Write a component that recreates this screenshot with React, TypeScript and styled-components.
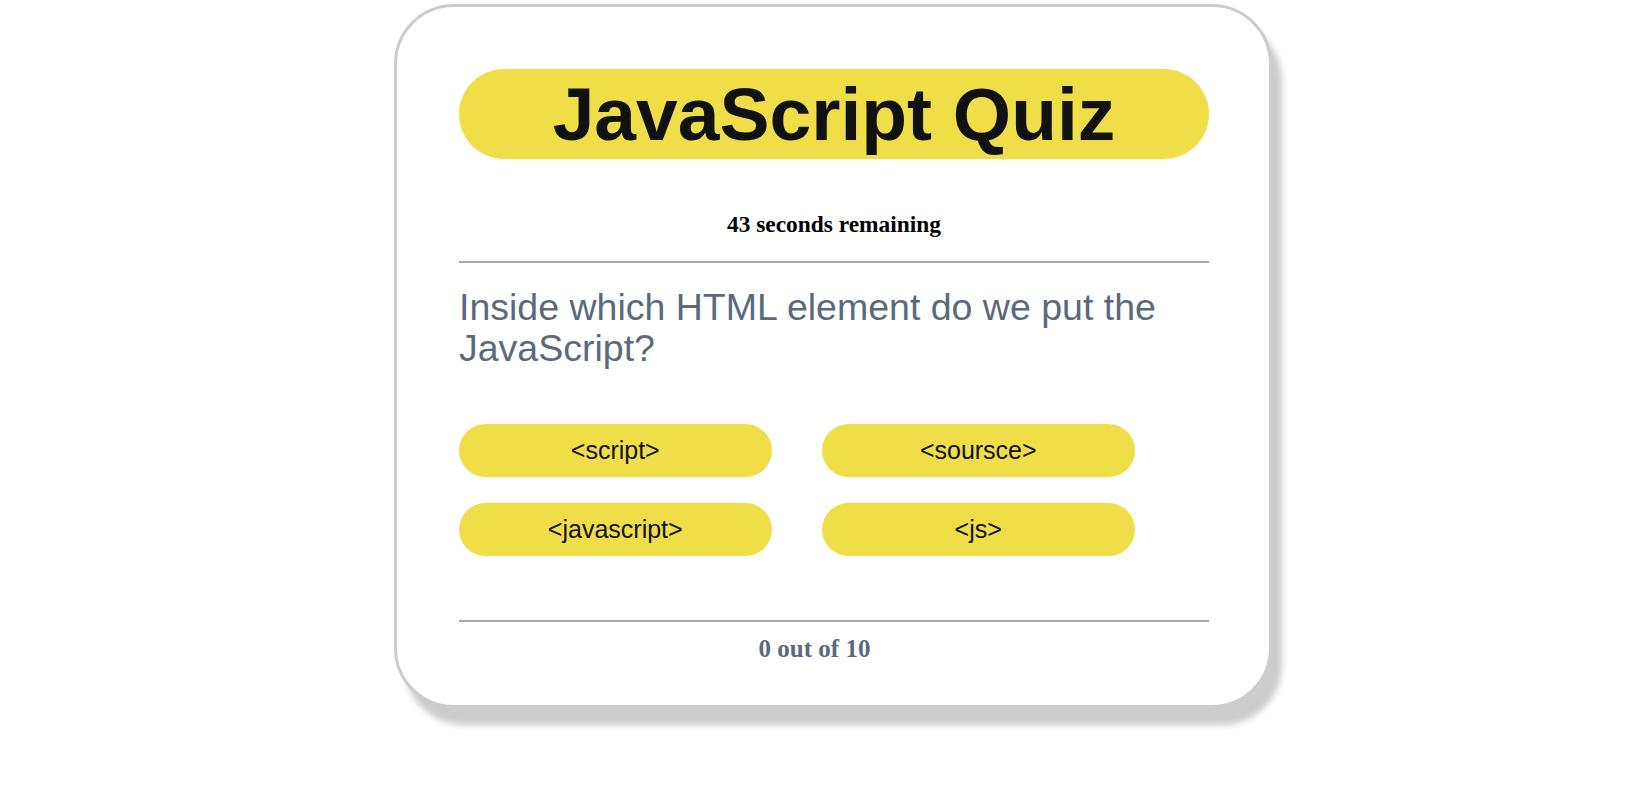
import React from 'react';
import styled, { createGlobalStyle } from 'styled-components';

const YELLOW = '#f0de48';
const SLATE = '#5a6a7a';

const GlobalStyle = createGlobalStyle`
  html, body {
    margin: 0;
    background: #ffffff;
  }
`;

const Page = styled.main`
  display: flex;
  justify-content: center;
  min-height: 100vh;
  box-sizing: border-box;
  padding: 4px 0 40px 14px;
`;

const Card = styled.section`
  align-self: flex-start;
  width: 750px;
  padding: 62px 60px 42px 62px;
  border: 3px solid #cccccc;
  border-radius: 60px;
  background: #ffffff;
  box-shadow: 10px 17px 6px #cccccc;
`;

const Title = styled.h1`
  margin: 0;
  height: 90px;
  border-radius: 45px;
  background: ${YELLOW};
  color: #111111;
  font: 700 75px/90px 'Liberation Sans', Arial, sans-serif;
  text-align: center;
`;

const Timer = styled.p`
  margin: 51.6px 0 0;
  color: #000000;
  font: 700 23.4px/27px 'Liberation Serif', 'Times New Roman', serif;
  text-align: center;
`;

const Divider = styled.hr<{ $gap: number }>`
  margin: ${({ $gap }) => $gap}px 0 0;
  height: 2px;
  border: 0;
  background: #a8a8a8;
`;

const Question = styled.h2`
  margin: 24.5px 0 0;
  color: ${SLATE};
  font: 400 37.5px/41px 'Liberation Sans', Arial, sans-serif;
`;

const Answers = styled.div`
  display: grid;
  grid-template-columns: repeat(2, 312.5px);
  column-gap: 50.5px;
  row-gap: 25.7px;
  margin-top: 54.5px;
`;

const AnswerButton = styled.button`
  height: 53.3px;
  padding: 0;
  border: 0;
  border-radius: 27px;
  background: ${YELLOW};
  color: #111111;
  font: 400 25px 'Liberation Sans', Arial, sans-serif;
  cursor: pointer;
`;

const Score = styled.p`
  margin: 12px 0 0;
  padding-right: 39px;
  color: ${SLATE};
  font: 700 25px/29px 'Liberation Serif', 'Times New Roman', serif;
  text-align: center;
`;

const answers = ['<script>', '<soursce>', '<javascript>', '<js>'];

export default function App() {
  return (
    <>
      <GlobalStyle />
      <Page>
        <Card>
          <Title>JavaScript Quiz</Title>
          <Timer>43 seconds remaining</Timer>
          <Divider $gap={23.4} />
          <Question>Inside which HTML element do we put the JavaScript?</Question>
          <Answers>
            {answers.map(answer => (
              <AnswerButton key={answer}>{answer}</AnswerButton>
            ))}
          </Answers>
          <Divider $gap={63.5} />
          <Score>0 out of 10</Score>
        </Card>
      </Page>
    </>
  );
}
